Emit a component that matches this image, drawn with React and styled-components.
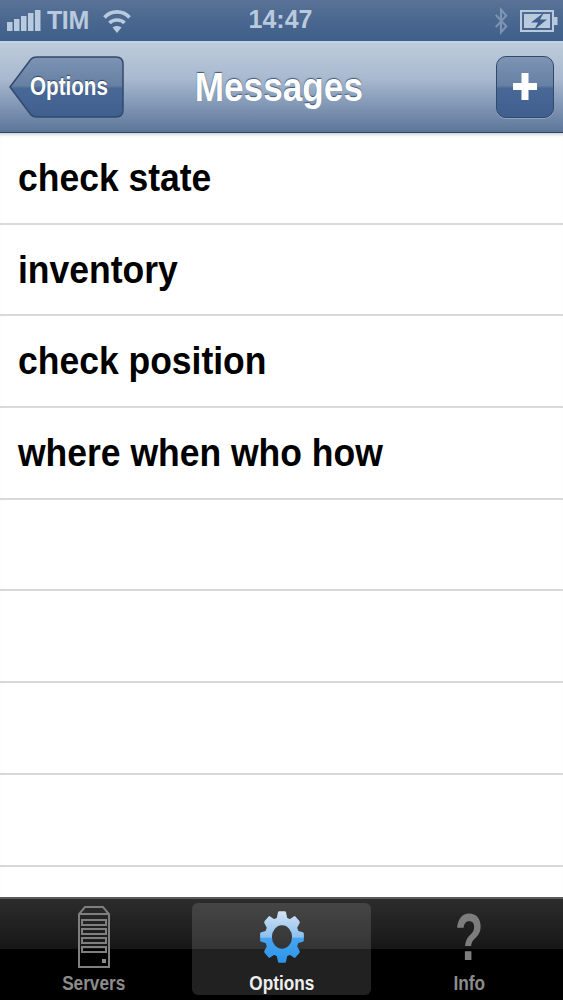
import React from "react";
import styled, { createGlobalStyle } from "styled-components";

const Global = createGlobalStyle`
  html, body { margin: 0; padding: 0; background: #fff; }
  * { box-sizing: border-box; }
`;
const Phone = styled.div`
  width: 563px; height: 1000px; display: flex; flex-direction: column; overflow: hidden;
  font-family: "Liberation Sans", Arial, sans-serif; background: #fff;
`;
const StatusBar = styled.div`
  height: 41px; flex: none; display: flex; align-items: center; padding: 0 5px 0 7px;
  background: linear-gradient(#5a7396 0%, #4a678f 50%, #3f5f8a 100%);
  color: #b9c9de; position: relative;
`;
const Carrier = styled.span`font-size: 25px; font-weight: 700; margin-left: 6px; letter-spacing: -0.4px;`;
const Wifi = styled.svg`width: 28px; height: 25px; margin-left: 14px;`;
const Clock = styled.span`
  position: absolute; left: 0; right: 0; top: 5px; text-align: center; font-size: 25px; line-height: 29px; font-weight: 700;
  padding-right: 2px;
`;
const StatusRight = styled.div`margin-left: auto; display: flex; align-items: center; gap: 12px;`;
const NavBar = styled.div`
  height: 92px; flex: none; display: flex; align-items: center; justify-content: space-between; position: relative;
  padding: 0 9px 2px;
  border-top: 2px solid #c0d2e6; border-bottom: 1px solid #2e4260;
  background: linear-gradient(#bdcbdb 0%, #a9b9cf 40%, #8ba0bc 62%, #5c769a 100%);
`;
const Title = styled.div`
  position: absolute; left: 0; right: 0; top: 19px; text-align: center; padding-right: 6px;
  font-size: 40px; line-height: 50px; font-weight: 700; color: #fff; text-shadow: 0 -1px 1px #3d5474;
  transform: scaleX(.88);
`;
const BackWrap = styled.div`position: relative; width: 115px; height: 62px;`;
const BackLabel = styled.span`
  position: absolute; left: 21px; top: 0; line-height: 60px; font-size: 25px; font-weight: 700; color: #fff;
  text-shadow: 0 -1px 1px #2f4566; transform: scaleX(.825); transform-origin: left;
`;
const PlusButton = styled.div`
  width: 58px; height: 62px; border-radius: 10px; border: 1.5px solid #33496b; display: flex; align-items: center; justify-content: center;
  background: linear-gradient(#7d94b3 0%, #6680a4 48%, #4a6896 52%, #3f5f8f 100%);
  box-shadow: 0 1px 0 rgba(255,255,255,.25);
`;
const List = styled.div`
  flex: 1; min-height: 0; background: #fff; overflow: hidden;
  box-shadow: inset 0 4px 3px -2px rgba(60,70,90,.22);
`;
const Row = styled.div`
  height: 91.7px; display: flex; align-items: center; padding: 0 18px; border-bottom: 2px solid #d9d9d9;
`;
const RowText = styled.span`
  font-size: 39px; font-weight: 700; color: #000; display: inline-block; white-space: nowrap;
  transform: scaleX(.91); transform-origin: left;
`;
const TabBar = styled.div`
  height: 103px; flex: none; display: grid; grid-template-columns: 187px 1fr 187px;
  padding: 4px 0 5px;
  border-top: 2px solid #5b5b5b;
  background: linear-gradient(#2c2c2c 0%, #171717 49%, #000 50%, #000 100%);
`;
const Tab = styled.div`
  display: flex; flex-direction: column; align-items: center; justify-content: space-between; border-radius: 6px;
  color: ${p => (p.$active ? "#eee" : "#8c8c8c")};
  background: ${p => (p.$active ? "rgba(255,255,255,.13)" : "transparent")};
  margin: ${p => (p.$active ? "0 5px" : "0")};
`;
const TabIcon = styled.div`height: 68px; display: flex; align-items: center; justify-content: center;`;
const TabLabel = styled.span`line-height: 24px; font-size: 20px; font-weight: 700; transform: scaleX(.86);`;
const Question = styled.span`
  font-size: 66px; line-height: 66px; color: #7d7d7d; font-weight: 700; display: inline-block; transform: scaleX(.7);
`;

function gearPath() {
  const cx = 24, cy = 24, n = 8, R = 21.5, r = 16.5;
  let d = "";
  for (let i = 0; i < n; i++) {
    const a = (i / n) * Math.PI * 2 - Math.PI / 2;
    const w = 0.13, v = 0.25;
    const pts = [[r, a - v], [R, a - w], [R, a + w], [r, a + v]];
    pts.forEach(([rad, t], j) => {
      const x = (cx + rad * Math.cos(t)).toFixed(2), y = (cy + rad * Math.sin(t)).toFixed(2);
      d += (i === 0 && j === 0 ? "M" : "L") + x + " " + y + " ";
    });
  }
  return d + "Z";
}

const items = ["check state", "inventory", "check position", "where when who how", "", "", "", "", ""];

export default function App() {
  return (
    <Phone>
      <Global />
      <StatusBar>
        <svg width="34" height="21" viewBox="0 0 34 21" fill="#b9c9de">
          <rect x="0" y="12" width="5.5" height="9" /><rect x="7" y="9" width="5.5" height="12" /><rect x="14" y="6" width="5.5" height="15" /><rect x="21" y="3" width="5.5" height="18" /><rect x="28" y="0" width="5.5" height="21" />
        </svg>
        <Carrier>TIM</Carrier>
        <Wifi viewBox="0 0 28 25" fill="none" stroke="#b9c9de" strokeWidth="3.6">
          <path d="M1.5 9.5 C8 2 20 2 26.5 9.5" /><path d="M6.5 15 C10 11 18 11 21.5 15" /><path d="M14 25 L9.5 19.5 C12 17.5 16 17.5 18.5 19.5 Z" fill="#b9c9de" stroke="none" />
        </Wifi>
        <Clock>14:47</Clock>
        <StatusRight>
          <svg width="14" height="28" viewBox="0 0 16 32" preserveAspectRatio="none" fill="none" stroke="#7d94b2" strokeWidth="2.4"><path d="M2 9 L14 22 L8 29 V3 L14 10 L2 23" /></svg>
          <svg width="38" height="22" viewBox="0 0 38 22">
            <rect x="1" y="1" width="32" height="20" fill="none" stroke="#b9c9de" strokeWidth="2" />
            <rect x="4" y="4" width="26" height="14" fill="#b9c9de" />
            <rect x="34" y="7" width="3.5" height="8" fill="#b9c9de" />
            <path d="M24 2.5 L11 12.5 H18 L14 20 L27 9.5 H20 Z" fill="#3f5f8a" />
          </svg>
        </StatusRight>
      </StatusBar>
      <NavBar>
        <BackWrap>
          <svg width="115" height="62" viewBox="0 0 115 62">
            <defs>
              <linearGradient id="bk" x1="0" y1="0" x2="0" y2="1">
                <stop offset="0" stopColor="#7d94b3" /><stop offset=".48" stopColor="#6680a4" /><stop offset=".52" stopColor="#4a6896" /><stop offset="1" stopColor="#3f5f8f" />
              </linearGradient>
            </defs>
            <path d="M1 31 L22 3 Q24 1 28 1 H107 Q114 1 114 8 V54 Q114 61 107 61 H28 Q24 61 22 59 Z" fill="url(#bk)" stroke="#33496b" strokeWidth="1.5" />
          </svg>
          <BackLabel>Options</BackLabel>
        </BackWrap>
        <Title>Messages</Title>
        <PlusButton>
          <svg width="24" height="27" viewBox="0 0 24 27" fill="#fff"><rect x="8.5" y="0" width="7" height="27" /><rect x="0" y="10" width="24" height="7" /></svg>
        </PlusButton>
      </NavBar>
      <List>
        {items.map((t, i) => <Row key={i}><RowText>{t}</RowText></Row>)}
      </List>
      <TabBar>
        <Tab>
          <TabIcon>
            <svg width="34" height="64" viewBox="0 0 34 64" fill="none" stroke="#7f7f7f" strokeWidth="2">
              <path d="M2 62 V9 L8 2 H26 L32 9 V62 Z" /><path d="M2 9 H32" />
              <rect x="5" y="15" width="24" height="5" /><rect x="5" y="24" width="24" height="5" /><rect x="5" y="33" width="24" height="5" /><rect x="5" y="42" width="24" height="5" />
              <rect x="25" y="54" width="4" height="4" fill="#8a8a8a" stroke="none" />
            </svg>
          </TabIcon>
          <TabLabel>Servers</TabLabel>
        </Tab>
        <Tab $active>
          <TabIcon>
            <svg width="46" height="54" viewBox="0 0 48 48" preserveAspectRatio="none">
              <defs>
                <linearGradient id="gr" x1="0" y1="0" x2="0" y2="1">
                  <stop offset="0" stopColor="#cfe0f4" /><stop offset=".5" stopColor="#8cc0ee" /><stop offset=".53" stopColor="#45a5f2" /><stop offset="1" stopColor="#2f95ea" />
                </linearGradient>
              </defs>
              <path fillRule="evenodd" fill="url(#gr)" stroke="url(#gr)" strokeWidth="3" strokeLinejoin="round" d={gearPath() + " M24 12 A12 12 0 1 0 24 36 A12 12 0 1 0 24 12 Z"} />
            </svg>
          </TabIcon>
          <TabLabel>Options</TabLabel>
        </Tab>
        <Tab>
          <TabIcon><Question>?</Question></TabIcon>
          <TabLabel>Info</TabLabel>
        </Tab>
      </TabBar>
    </Phone>
  );
}
